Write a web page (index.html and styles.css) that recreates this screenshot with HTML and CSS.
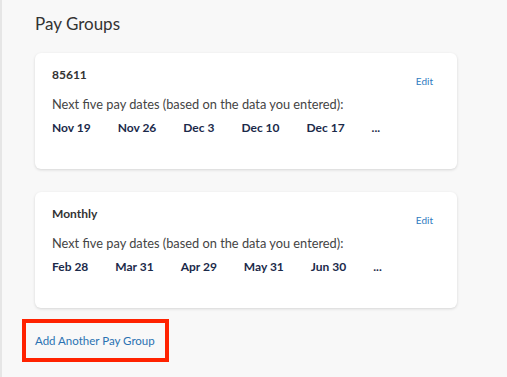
FILE: index.html
```html
<!DOCTYPE html>
<html>
<head>
<meta charset="utf-8">
<link rel="stylesheet" href="styles.css">
</head>
<body>
<div class="page">
  <h1 class="title">Pay Groups</h1>
  <div class="card">
    <div class="card-head">
      <div class="group-name">85611</div>
      <a class="edit">Edit</a>
    </div>
    <p class="note">Next five pay dates (based on the data you entered):</p>
    <div class="dates">
      <span>Nov 19</span><span>Nov 26</span><span>Dec 3</span><span>Dec 10</span><span>Dec 17</span><span>...</span>
    </div>
  </div>
  <div class="card">
    <div class="card-head">
      <div class="group-name">Monthly</div>
      <a class="edit">Edit</a>
    </div>
    <p class="note">Next five pay dates (based on the data you entered):</p>
    <div class="dates">
      <span>Feb 28</span><span>Mar 31</span><span>Apr 29</span><span>May 31</span><span>Jun 30</span><span>...</span>
    </div>
  </div>
  <a class="add-link">Add Another Pay Group</a>
</div>
</body>
</html>
```

FILE: styles.css
```css
html, body {
  margin: 0;
  padding: 0;
  height: 100%;
}
body {
  background: #f8f8f8;
  font-family: Lato, "Open Sans", sans-serif;
  color: #444;
}
.page {
  box-sizing: border-box;
  min-height: 100%;
  border-left: 2px solid #e6e6e6;
  padding: 14px 50px 0 33px;
}
.title {
  margin: 0;
  font-size: 17px;
  line-height: 20px;
  font-weight: 400;
  color: #333;
}
.card {
  margin-top: 19px;
  background: #fff;
  border-radius: 6px;
  box-shadow: 0 1px 3px rgba(0, 0, 0, 0.14);
  padding: 14px 24px 34px 17px;
}
.card + .card {
  margin-top: 23px;
}
.card-head {
  display: flex;
  justify-content: space-between;
  align-items: flex-start;
}
.group-name {
  font-size: 12px;
  line-height: 15px;
  font-weight: 700;
  color: #333;
}
.edit {
  margin-top: 8px;
  font-size: 10px;
  line-height: 12px;
  color: #2f7bbf;
}
.note {
  margin: 9px 0 0;
  font-size: 12.8px;
  line-height: 16px;
  color: #444;
}
.dates {
  margin-top: 8px;
  display: flex;
  gap: 27px;
  font-size: 12px;
  line-height: 15px;
  font-weight: 700;
  color: #1b2a4a;
}
.add-link {
  display: inline-block;
  margin: 11px 0 0 -13px;
  padding: 10px 10px 10px 9px;
  border: 4px solid #ff2200;
  font-size: 11.5px;
  line-height: 15px;
  color: #2a72b2;
}
```
